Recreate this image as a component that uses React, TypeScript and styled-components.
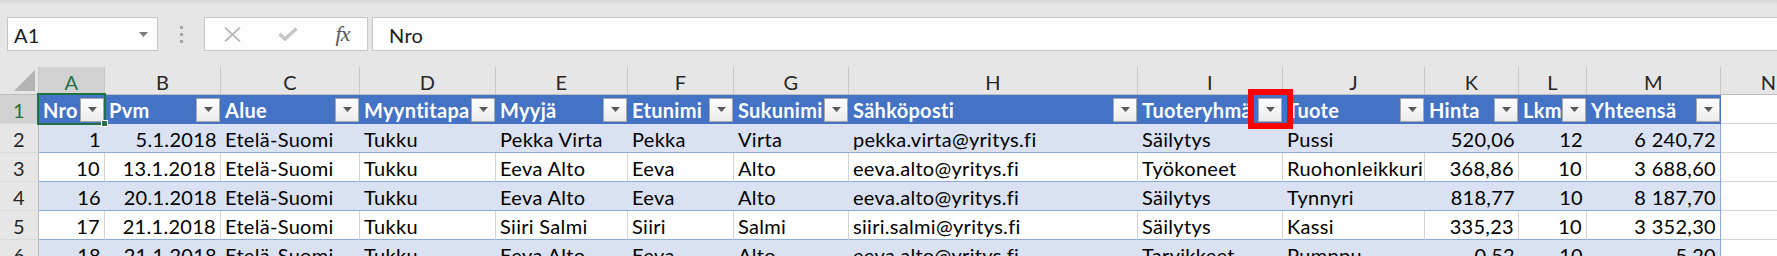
import React from "react"
import styled, { createGlobalStyle, css } from "styled-components"

type Align = "left" | "right"
type Kind = "band" | "plain"

const GlobalStyle = createGlobalStyle`
    html, body {
        margin: 0;
        padding: 0;
    }
    body {
        background: #e6e6e6;
        font-family: Lato, "Liberation Sans", sans-serif;
        overflow: hidden;
    }
`

const COLS = [39, 66, 116, 139, 136, 132, 106, 115, 289, 145, 142, 94, 68, 134, 96]
const LETTERS = ["A", "B", "C", "D", "E", "F", "G", "H", "I", "J", "K", "L", "M", "N"]
const HEADERS = ["Nro", "Pvm", "Alue", "Myyntitapa", "Myyjä", "Etunimi", "Sukunimi", "Sähköposti", "Tuoteryhmä", "Tuote", "Hinta", "Lkm", "Yhteensä"]
const ALIGN: Align[] = ["right", "right", "left", "left", "left", "left", "left", "left", "left", "left", "right", "right", "right"]

const ROWS = [
    ["1", "5.1.2018", "Etelä-Suomi", "Tukku", "Pekka Virta", "Pekka", "Virta", "pekka.virta@yritys.fi", "Säilytys", "Pussi", "520,06", "12", "6 240,72"],
    ["10", "13.1.2018", "Etelä-Suomi", "Tukku", "Eeva Alto", "Eeva", "Alto", "eeva.alto@yritys.fi", "Työkoneet", "Ruohonleikkuri", "368,86", "10", "3 688,60"],
    ["16", "20.1.2018", "Etelä-Suomi", "Tukku", "Eeva Alto", "Eeva", "Alto", "eeva.alto@yritys.fi", "Säilytys", "Tynnyri", "818,77", "10", "8 187,70"],
    ["17", "21.1.2018", "Etelä-Suomi", "Tukku", "Siiri Salmi", "Siiri", "Salmi", "siiri.salmi@yritys.fi", "Säilytys", "Kassi", "335,23", "10", "3 352,30"],
    ["18", "21.1.2018", "Etelä-Suomi", "Tukku", "Eeva Alto", "Eeva", "Alto", "eeva.alto@yritys.fi", "Tarvikkeet", "Pumppu", "0,52", "10", "5,20"],
]

const Page = styled.div`
    width: 1777px;
    height: 256px;
    overflow: hidden;
    background: #e6e6e6;
`

const TopStrip = styled.div`
    height: 17px;
    background: linear-gradient(#d6d6d6 0px, #e6e6e6 5px);
`

const FormulaBar = styled.div`
    display: flex;
    height: 34px;
    padding-left: 7px;
`

const BarBox = styled.div`
    box-sizing: border-box;
    height: 34px;
    background: #fdfdfd;
    border: 1px solid #c6c6c6;
    display: flex;
    align-items: center;
    font-size: 20px;
    letter-spacing: 0.3px;
    color: #1a1a1a;
`

const NameBox = styled(BarBox)`
    width: 151px;
    padding: 1px 9px 0 6px;
    justify-content: space-between;
`

const Grip = styled.div`
    width: 46px;
    display: flex;
    flex-direction: column;
    align-items: center;
    justify-content: center;
    gap: 4px;
    span {
        width: 3px;
        height: 3px;
        background: #a6a6a6;
    }
`

const FxBox = styled(BarBox)`
    width: 164px;
`

const FxSlot = styled.div`
    flex: 0 0 55px;
    display: flex;
    justify-content: center;
    align-items: center;
`

const FxLabel = styled.span`
    font-family: "Liberation Serif", serif;
    font-style: italic;
    font-size: 22px;
    color: #595959;
    letter-spacing: -1px;
`

const FormulaInput = styled(BarBox)`
    flex: 1;
    margin-left: 4px;
    padding: 1px 0 0 16px;
    border-right: none;
`

const Gap = styled.div`
    height: 16px;
`

const Sheet = styled.div`
    display: grid;
    grid-template-columns: ${COLS.map(c => c + "px").join(" ")};
    grid-template-rows: 28px;
    grid-auto-rows: 29px;
    font-size: 20px;
    line-height: 26px;
    letter-spacing: 0.3px;
`

const headerCell = css`
    box-sizing: border-box;
    background: #e6e6e6;
    border-right: 1px solid #c8c8c8;
    color: #262626;
    text-align: center;
    padding-top: 2px;
`

const Corner = styled.div`
    ${headerCell};
    border-bottom: 1px solid #bdbdbd;
    display: flex;
    justify-content: flex-end;
    align-items: flex-end;
    padding: 0 3px 3px 0;
`

const ColHead = styled.div<{ $active?: boolean }>`
    ${headerCell};
    border-bottom: 1px solid #bdbdbd;
    ${p => p.$active && css`
        background: #d2d2d2;
        color: #217346;
    `}
`

const RowHead = styled.div<{ $active?: boolean }>`
    ${headerCell};
    border-right-color: #bdbdbd;
    border-bottom: 1px solid #dadada;
    ${p => p.$active && css`
        background: #d2d2d2;
        color: #217346;
    `}
`

const HeadCell = styled.div`
    position: relative;
    display: flex;
    background: #4472c4;
    color: #fff;
    font-weight: 700;
`

const HeadLabel = styled.span`
    flex: 1;
    min-width: 0;
    overflow: hidden;
    white-space: nowrap;
    padding: 2px 0 0 4px;
`

const FilterButton = styled.span`
    box-sizing: border-box;
    flex: 0 0 24px;
    height: 24px;
    margin: 3px 1px 0 0;
    border: 1px solid #a9a9a9;
    background: linear-gradient(#ffffff, #ebebeb);
    display: flex;
    align-items: center;
    justify-content: center;
    padding-bottom: 2px;
`

const Cell = styled.div<{ $kind: Kind, $align: Align, $edge?: boolean }>`
    box-sizing: border-box;
    overflow: hidden;
    white-space: nowrap;
    padding: 2px 4px 0 4px;
    color: #000;
    text-align: ${p => p.$align};
    border-bottom: 1px solid #8ea9db;
    ${p => p.$kind === "band" ? css`
        background: #d9e1f2;
    ` : css`
        background: #fff;
        border-right: 1px solid #d4d4d4;
    `}
    ${p => p.$edge && css`
        border-right: 1px solid #8ea9db;
    `}
`

const EmptyCell = styled.div`
    box-sizing: border-box;
    background: #fff;
    border-bottom: 1px solid #d4d4d4;
`

const SelectionFrame = styled.div`
    position: absolute;
    top: -2px;
    left: -2px;
    right: -1px;
    bottom: -1px;
    border: 2px solid #217346;
    z-index: 3;
    pointer-events: none;
`

const FillHandle = styled.span`
    position: absolute;
    right: -4px;
    bottom: -4px;
    width: 7px;
    height: 7px;
    box-sizing: border-box;
    background: #217346;
    border: 1px solid #fff;
`

const Highlight = styled.div`
    position: absolute;
    left: 110px;
    top: -6px;
    width: 45px;
    height: 40px;
    box-sizing: border-box;
    border: 6px solid #ff0000;
    z-index: 4;
`

const Caret = ({ color = "#595959" }: { color?: string }) => (
    <svg width="9" height="5" viewBox="0 0 9 5">
        <path d="M0 0 L9 0 L4.5 5 Z" fill={color} />
    </svg>
)

const App = () => {
    return (
        <Page>
            <GlobalStyle />
            <TopStrip />
            <FormulaBar>
                <NameBox>
                    <span>A1</span>
                    <Caret color="#7a7a7a" />
                </NameBox>
                <Grip><span /><span /><span /></Grip>
                <FxBox>
                    <FxSlot>
                        <svg width="17" height="15" viewBox="0 0 17 15">
                            <path d="M1 0.5 L16 14.5 M16 0.5 L1 14.5" stroke="#b8b8b8" strokeWidth="1.8" />
                        </svg>
                    </FxSlot>
                    <FxSlot>
                        <svg width="20" height="14" viewBox="0 0 20 14">
                            <path d="M1.5 7 L7 12 L18.5 1.5" stroke="#c6c6c6" strokeWidth="3.6" fill="none" />
                        </svg>
                    </FxSlot>
                    <FxSlot><FxLabel>fx</FxLabel></FxSlot>
                </FxBox>
                <FormulaInput>Nro</FormulaInput>
            </FormulaBar>
            <Gap />
            <Sheet>
                <Corner>
                    <svg width="21" height="21" viewBox="0 0 21 21">
                        <path d="M21 0 L21 21 L0 21 Z" fill="#b4b4b4" />
                    </svg>
                </Corner>
                {LETTERS.map((l, i) => <ColHead key={l} $active={i === 0}>{l}</ColHead>)}

                <RowHead $active>1</RowHead>
                {HEADERS.map((h, i) => (
                    <HeadCell key={h}>
                        <HeadLabel>{h}</HeadLabel>
                        <FilterButton><Caret /></FilterButton>
                        {i === 0 && <SelectionFrame><FillHandle /></SelectionFrame>}
                        {i === 8 && <Highlight />}
                    </HeadCell>
                ))}
                <EmptyCell />

                {ROWS.map((row, r) => (
                    <React.Fragment key={r}>
                        <RowHead>{r + 2}</RowHead>
                        {row.map((v, c) => (
                            <Cell
                                key={c}
                                $kind={r % 2 === 0 ? "band" : "plain"}
                                $align={ALIGN[c]}
                                $edge={c === row.length - 1}
                            >
                                {v}
                            </Cell>
                        ))}
                        <EmptyCell />
                    </React.Fragment>
                ))}
            </Sheet>
        </Page>
    )
}

export default App
